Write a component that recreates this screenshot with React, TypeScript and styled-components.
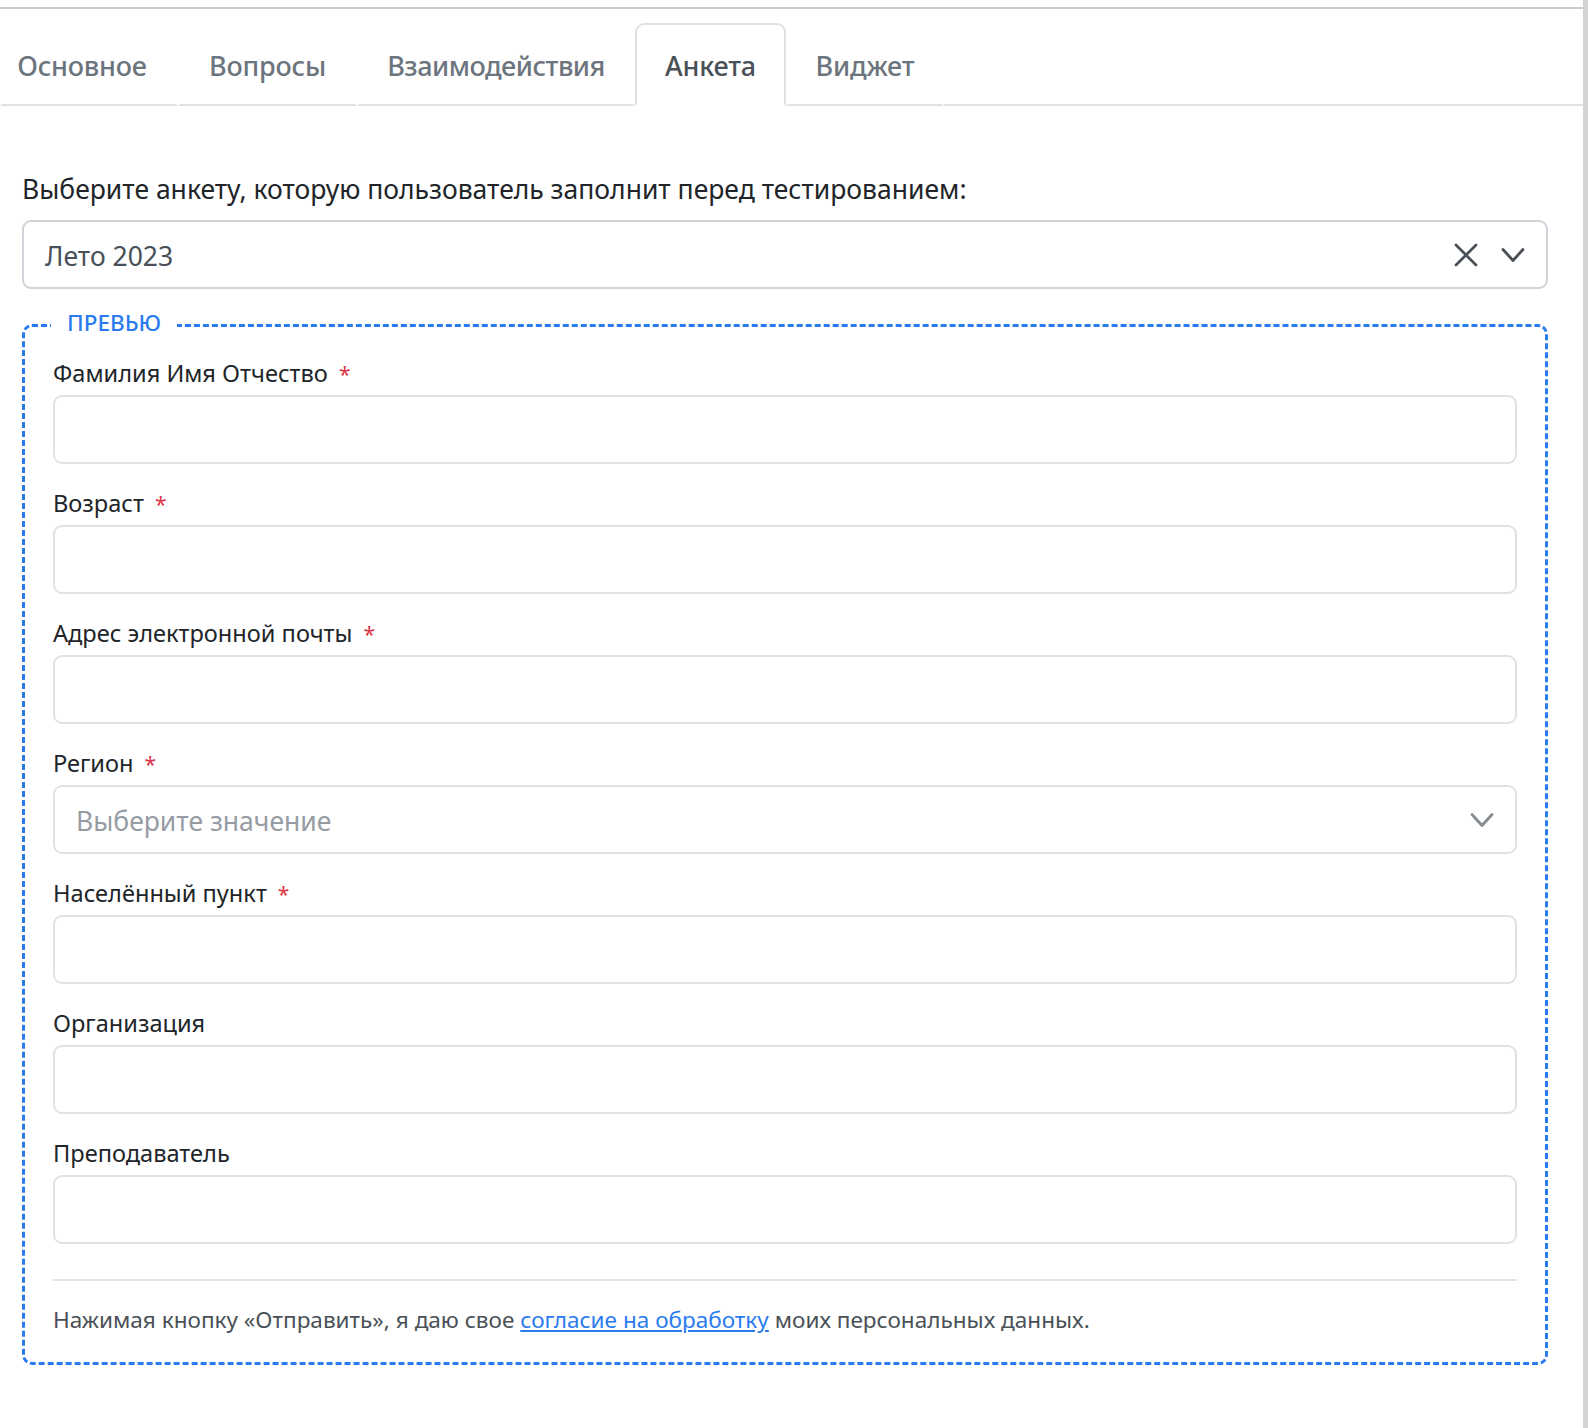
import React from "react";
import styled, { createGlobalStyle } from "styled-components";

const Global = createGlobalStyle`
  html, body { margin: 0; padding: 0; background: #fff; }
  body { font-family: "Noto Sans", "Open Sans", "Liberation Sans", sans-serif; color: #212529; overflow: hidden; }
  * { box-sizing: border-box; }
`;

const Page = styled.div`
  width: 1588px;
  height: 1428px;
  display: flex;
  overflow: hidden;
`;
const Main = styled.main`
  width: 1583px;
  padding-top: 7px;
  display: flex;
  flex-direction: column;
`;
const Rail = styled.div`
  width: 5px;
  background: #d4d4d2;
`;
const TopRule = styled.div`
  height: 2px;
  background: #c9cbcc;
`;
const TabBar = styled.nav`
  margin-top: 14px;
  height: 83px;
  display: flex;
`;
const Tab = styled.div<{ $active?: boolean; $w: number; $tight?: boolean }>`
  width: ${(p) => p.$w}px;
  height: 83px;
  display: flex;
  align-items: center;
  justify-content: center;
  padding-top: 2px;
  font-size: 27px;
  font-weight: 500;
  letter-spacing: ${(p) => (p.$tight ? "-0.5px" : "-0.2px")};
  color: ${(p) => (p.$active ? "#495057" : "#6c757d")};
  border: 2px solid ${(p) => (p.$active ? "#dee2e6" : "transparent")};
  border-bottom: 2px solid ${(p) => (p.$active ? "#fff" : "#dee2e6")};
  border-radius: ${(p) => (p.$active ? "9px 9px 0 0" : "0")};
  &:first-child {
    padding-right: 14px;
  }
`;
const TabFill = styled.div`
  flex: 1;
  border-bottom: 2px solid #dee2e6;
`;
const Body = styled.section`
  padding: 63px 35px 0 22px;
`;
const Lead = styled.div`
  font-size: 26.5px;
  line-height: 40px;
  height: 40px;
  margin-bottom: 11px;
`;
const SelectBox = styled.div<{ $muted?: boolean }>`
  height: 69px;
  display: flex;
  align-items: center;
  padding: 0 21px 0 21px;
  border: 2px solid ${(p) => (p.$muted ? "#dee2e6" : "#ced4da")};
  border-radius: 9px;
  background: #fff;
  font-size: 26.5px;
  color: ${(p) => (p.$muted ? "#969ca3" : "#495057")};
`;
const SelectValue = styled.span`
  flex: 1;
  padding-top: 3px;
`;
const IconSlot = styled.svg<{ $gap?: number }>`
  display: block;
  margin-left: ${(p) => p.$gap ?? 0}px;
  fill: none;
  stroke-linecap: round;
  stroke-linejoin: round;
`;
const Preview = styled.fieldset`
  margin: 23px 0 0;
  padding: 15px 28px 0 28px;
  height: 1053px;
  border: 3px dashed #2b7bf0;
  border-radius: 10px;
  min-width: 0;
`;
const Legend = styled.legend`
  margin-left: -2px;
  padding: 0 16px 4px;
  font-size: 22.5px;
  line-height: 22px;
  font-weight: 500;
  color: #2b7bf0;
`;
const Field = styled.div`
  height: 130px;
  display: flex;
  flex-direction: column;
`;
const FieldLabel = styled.label`
  height: 42px;
  font-size: 23.6px;
  line-height: 41px;
`;
const Star = styled.span`
  color: #dc3545;
  font-size: 21px;
  margin-left: 11px;
`;
const Input = styled.div`
  height: 69px;
  border: 2px solid #dee2e6;
  border-radius: 9px;
  background: #fff;
`;
const Divider = styled.hr`
  margin: 0;
  margin-top: 16px;
  border: 0;
  border-top: 2px solid #e2e4e7;
`;
const Consent = styled.p`
  margin: 22px 0 0;
  font-size: 22.55px;
  line-height: 34px;
  color: #495057;
`;
const Link = styled.a`
  color: #2b7bf0;
  text-decoration: underline;
`;

const fields: { label: string; required?: boolean; select?: boolean }[] = [
  { label: "Фамилия Имя Отчество", required: true },
  { label: "Возраст", required: true },
  { label: "Адрес электронной почты", required: true },
  { label: "Регион", required: true, select: true },
  { label: "Населённый пункт", required: true },
  { label: "Организация" },
  { label: "Преподаватель" },
];

const Chevron = ({ color, gap }: { color: string; gap?: number }) => (
  <IconSlot $gap={gap} width="26" height="16" viewBox="0 0 26 16" stroke={color} strokeWidth="2.8">
    <path d="M4 2.5 L14 13.5 L24 2.5" />
  </IconSlot>
);

export default function App() {
  return (
    <Page>
      <Global />
      <Main>
        <TopRule />
        <TabBar>
          <Tab $w={178}>Основное</Tab>
          <Tab $w={179}>Вопросы</Tab>
          <Tab $w={278} $tight>Взаимодействия</Tab>
          <Tab $w={151} $active>Анкета</Tab>
          <Tab $w={158}>Виджет</Tab>
          <TabFill />
        </TabBar>
        <Body>
          <Lead>Выберите анкету, которую пользователь заполнит перед тестированием:</Lead>
          <SelectBox>
            <SelectValue>Лето 2023</SelectValue>
            <IconSlot width="24" height="24" viewBox="0 0 24 24" stroke="#495057" strokeWidth="2.8">
              <path d="M2 2 L22 22 M22 2 L2 22" />
            </IconSlot>
            <Chevron color="#495057" gap={21} />
          </SelectBox>
          <Preview>
            <Legend>ПРЕВЬЮ</Legend>
            {fields.map((f) => (
              <Field key={f.label}>
                <FieldLabel>
                  {f.label}
                  {f.required && <Star>*</Star>}
                </FieldLabel>
                {f.select ? (
                  <SelectBox $muted>
                    <SelectValue>Выберите значение</SelectValue>
                    <Chevron color="#868b90" />
                  </SelectBox>
                ) : (
                  <Input />
                )}
              </Field>
            ))}
            <Divider />
            <Consent>
              Нажимая кнопку «Отправить», я даю свое <Link href="#">согласие на обработку</Link> моих персональных данных.
            </Consent>
          </Preview>
        </Body>
      </Main>
      <Rail />
    </Page>
  );
}
